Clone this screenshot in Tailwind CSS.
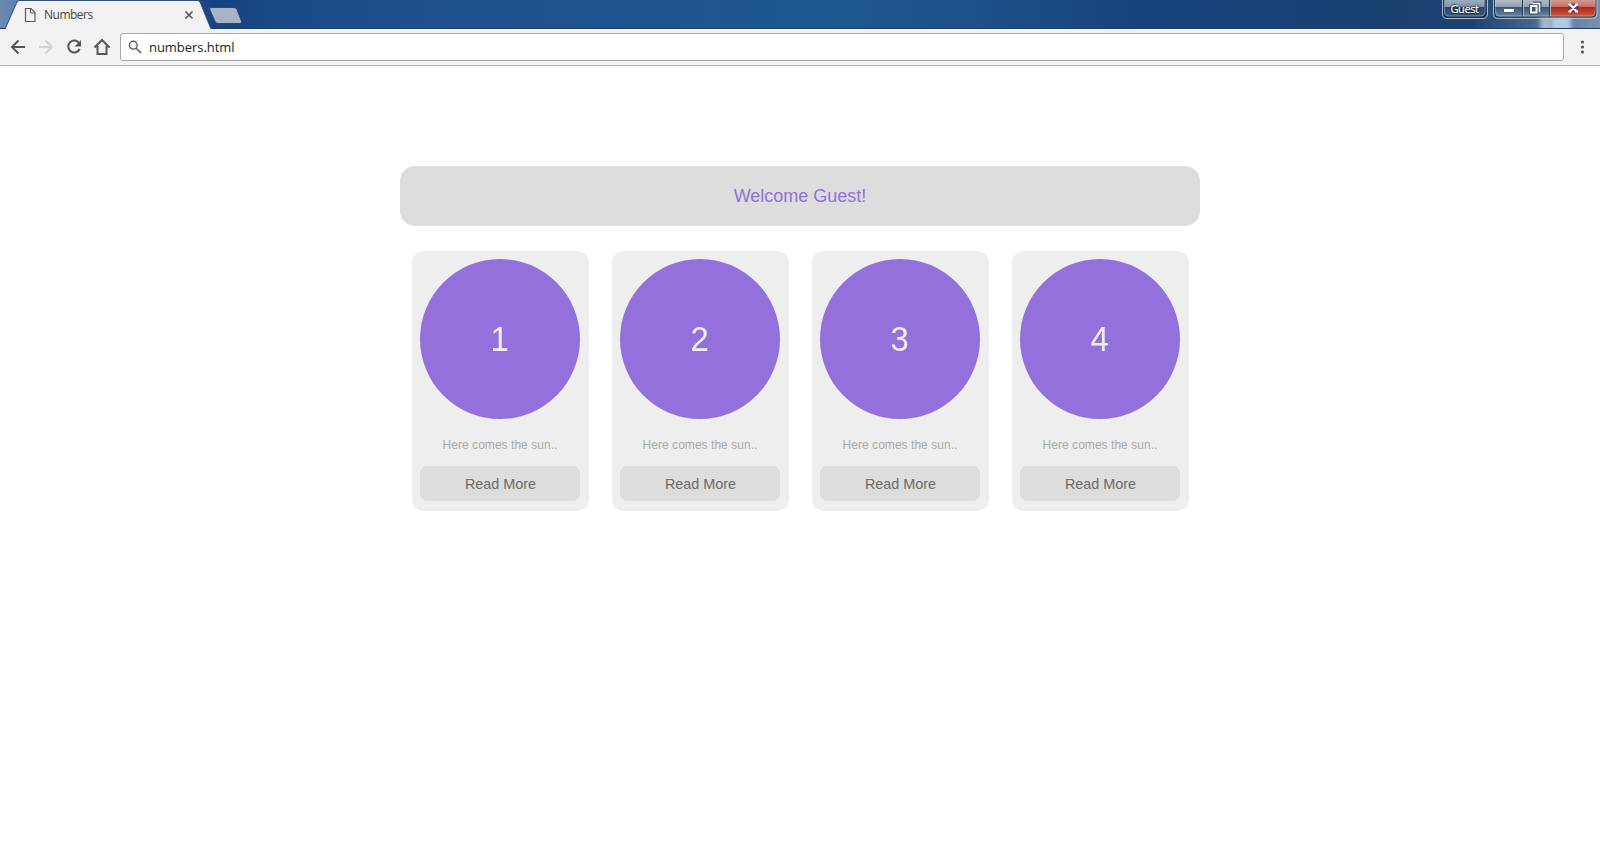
<!DOCTYPE html>
<html lang="en">
<head>
<meta charset="utf-8">
<title>Numbers</title>
<script src="https://cdn.jsdelivr.net/npm/@tailwindcss/browser@4"></script>
</head>
<body class="bg-white w-[1600px] h-[860px] overflow-hidden font-['Liberation_Sans',sans-serif]">
<header class="relative h-[29px] bg-[linear-gradient(90deg,#6b89b2_0px,#5c7cab_20px,#174480_215px,#1b4d8b_330px,#1e538e_560px,#1c578e_850px,#1c5088_980px,#17427b_1160px,#19406f_1390px,#1c4373_1470px,#43648b_1530px,#6482a2_1570px,#7890ad_1600px)]">
  <svg class="absolute inset-0" width="1600" height="29" viewBox="0 0 1600 29">
    <defs>
      <linearGradient id="glass" x1="0" y1="0" x2="0" y2="1"><stop offset="0" stop-color="#a5b3c5"/><stop offset=".47" stop-color="#8294ac"/><stop offset=".5" stop-color="#2c4666"/><stop offset="1" stop-color="#3d5c80"/></linearGradient>
      <linearGradient id="glass2" x1="0" y1="0" x2="0" y2="1"><stop offset="0" stop-color="#b6c1ce"/><stop offset=".47" stop-color="#8fa0b5"/><stop offset=".5" stop-color="#3d5674"/><stop offset="1" stop-color="#7189a5"/></linearGradient>
      <linearGradient id="red" x1="0" y1="0" x2="0" y2="1"><stop offset="0" stop-color="#dba8a0"/><stop offset=".47" stop-color="#c46c60"/><stop offset=".5" stop-color="#ad2818"/><stop offset="1" stop-color="#cf604b"/></linearGradient>
      <filter id="soft" x="-50%" width="200%"><feGaussianBlur stdDeviation="2 0"/></filter>
    </defs>
    <path d="M1540 0h12v28h-12z" fill="#a3b8c8" filter="url(#soft)"/>
    <path d="M1551 0h20v28h-20z" fill="#b1c9e5" filter="url(#soft)"/>
    <path d="M0 28.500H1600" stroke="#264064"/>
    <path d="M5 29 L17 2 Q18 .5 20 .5H205Q207 .5 207.500 2L211 29" fill="none"/>
    <path d="M5 29 L17 2 Q18 .5 20 .5H197Q199 .5 200 2L211 29" fill="#f2f2f2" stroke="#31527c"/>
    <path d="M211 7.500H234Q236 7.500 236.700 9L241.500 21Q242.300 23.500 240 23.500H218Q216 23.500 215 21.500L209.800 9.500Q209 7.500 211 7.500Z" fill="#a7b4c3" stroke="#234a7b"/>
    <g fill="none" stroke="#5a5a5a"><path d="M25.500 8.500h5.500l4 4v9h-9.500z" stroke-width="1.200"/><path d="M30.500 8.500v4.500h4.500"/><path d="M185.500 11.500l7 7m0-7l-7 7" stroke-width="1.700"/></g>
    <path d="M1443.500-2V13q0 4 4 4h34q4 0 4-4V-2z" fill="url(#glass)" stroke="#1d3049" stroke-width="2"/>
    <path d="M1442.500-2V14q0 4.500 4.500 4.500h36q4.500 0 4.500-4.500V-2" fill="none" stroke="#a9b8ca"/>
    <path d="M1444.500-2V12q0 4 4 4h32.500q4 0 4-4V-2" fill="none" stroke="#91a4ba" stroke-opacity=".7"/>
    <path d="M1495-2V13q0 4 4 4h24V-2z" fill="url(#glass2)"/><path d="M1523-2h27v19h-27z" fill="url(#glass2)"/>
    <path d="M1550-2h46V13q0 4-4 4h-42z" fill="url(#red)"/>
    <path d="M1494.500-2V13q0 4 4 4h93.500q4 0 4-4V-2M1522.500 0v17M1549.500 0v17" fill="none" stroke="#26364d"/>
    <path d="M1493.500-2V14q0 4.500 4.500 4.500h94.500q4.500 0 4.500-4.500V-2M1523.500 0v16M1550.500 0v16" fill="none" stroke="#b8c4d2" stroke-opacity=".85"/>
    <path d="M1495.500-2V12q0 4 4 4h91.500q4 0 4-4V-2" fill="none" stroke="#e6e9ee" stroke-opacity=".3"/>
    <path d="M1503.500 8.500h11v4h-11z" fill="#fff" stroke="#4d5c70"/>
    <g fill="none"><path d="M1533 3.500h6.500v8M1531 6h5.500v6.500h-5.500z" stroke="#414f65" stroke-width="4"/><path d="M1532.500 3.500h7v8.500" stroke="#f5f6f7" stroke-width="1.500"/><path d="M1531 6h5.500v6.500h-5.500z" stroke="#f5f6f7" stroke-width="2"/></g>
    <path d="M1570 4.500l6.500 7m0-7l-6.500 7" stroke="#5d4554" stroke-width="5"/><path d="M1570 4.500l6.500 7m0-7l-6.500 7M1568.500 4.500h3m3.500 0h3M1568.500 11.500h3m3.500 0h3" stroke="#fff" stroke-width="2"/>
  </svg>
  <div class="relative flex h-[29px] items-center pl-[44px]">
    <span class="text-[12px] leading-[16px] text-[#444] font-['Open_Sans',sans-serif] tracking-[-0.5px]">Numbers</span>
    <span class="absolute left-[1443px] top-0 w-[43px] text-center text-[11px] leading-[18px] text-white font-['Open_Sans',sans-serif] tracking-[-0.4px] [-webkit-text-stroke:0.2px_white] [text-shadow:0_0_2px_#000,0_0_2px_#000]">Guest</span>
  </div>
</header>
<nav class="flex h-[37px] items-center border-b border-[#b5b3b5] bg-[#f2f2f2]">
  <svg class="shrink-0" width="120" height="36" viewBox="0 29 120 36" fill="none" stroke="#555" stroke-width="2">
    <path d="M25 47H12.500M18.500 40.500L12 47l6.500 6.500"/>
    <path d="M39 47H51.500M45.500 40.500L52 47l-6.500 6.500" stroke="#d3d3d3"/>
    <path d="M79.300 43.300A6 6 0 1 0 79.700 49"/><path d="M81 40v6.500h-6.500z" fill="#555" stroke="none"/>
    <path d="M94.500 47.500L102 40l7.500 7.500M97.500 46v8h9v-8"/>
  </svg>
  <div class="flex h-[28px] w-[1444px] items-center rounded-[3px] border border-[#a9a9a9] bg-white">
    <svg class="ml-[7px] shrink-0" width="14" height="14" viewBox="0 0 14 14" fill="none" stroke="#5a5a5a"><circle cx="5.300" cy="5.200" r="3.900" stroke-width="1.400"/><path d="M8.200 8.200L13 13" stroke-width="1.600"/></svg>
    <span class="ml-[7px] text-[13px] leading-[20px] text-[#222] font-['Open_Sans',sans-serif] tracking-[-0.05px]">numbers.html</span>
  </div>
  <svg class="ml-[13px]" width="12" height="20" viewBox="0 0 12 20" fill="#555"><circle cx="5.500" cy="5" r="1.600"/><circle cx="5.500" cy="10" r="1.600"/><circle cx="5.500" cy="15" r="1.600"/></svg>
</nav>
<main class="mx-auto mt-[100px] w-[800px]">
  <h1 class="flex h-[60px] items-center justify-center rounded-[15px] bg-[#ddd] text-[18px] text-[#9370db]">Welcome Guest!</h1>
  <section class="mt-[25px] flex gap-[23px] pl-[12px]">
    <article class="h-[260px] w-[177px] shrink-0 rounded-[12px] bg-[#eee] px-2 pt-2 text-center">
      <div class="flex size-[160px] items-center justify-center rounded-full bg-[#9370db] pr-px text-[35px] text-[#eee]"><span class="scale-x-[.94]">1</span></div>
      <p class="mt-[18px] w-[160px] text-[12px] leading-[16px] tracking-[0.04px] text-[#aaa]">Here comes the sun..</p>
      <a class="mt-[13px] flex h-[35px] w-[160px] items-center justify-center rounded-[7px] bg-[#ddd] pt-[2px] pl-px text-[14.4px] text-[#696969]">Read More</a>
    </article>
    <article class="h-[260px] w-[177px] shrink-0 rounded-[12px] bg-[#eee] px-2 pt-2 text-center">
      <div class="flex size-[160px] items-center justify-center rounded-full bg-[#9370db] pr-px text-[35px] text-[#eee]"><span class="scale-x-[.94]">2</span></div>
      <p class="mt-[18px] w-[160px] text-[12px] leading-[16px] tracking-[0.04px] text-[#aaa]">Here comes the sun..</p>
      <a class="mt-[13px] flex h-[35px] w-[160px] items-center justify-center rounded-[7px] bg-[#ddd] pt-[2px] pl-px text-[14.4px] text-[#696969]">Read More</a>
    </article>
    <article class="h-[260px] w-[177px] shrink-0 rounded-[12px] bg-[#eee] px-2 pt-2 text-center">
      <div class="flex size-[160px] items-center justify-center rounded-full bg-[#9370db] pr-px text-[35px] text-[#eee]"><span class="scale-x-[.94]">3</span></div>
      <p class="mt-[18px] w-[160px] text-[12px] leading-[16px] tracking-[0.04px] text-[#aaa]">Here comes the sun..</p>
      <a class="mt-[13px] flex h-[35px] w-[160px] items-center justify-center rounded-[7px] bg-[#ddd] pt-[2px] pl-px text-[14.4px] text-[#696969]">Read More</a>
    </article>
    <article class="h-[260px] w-[177px] shrink-0 rounded-[12px] bg-[#eee] px-2 pt-2 text-center">
      <div class="flex size-[160px] items-center justify-center rounded-full bg-[#9370db] pr-px text-[35px] text-[#eee]"><span class="scale-x-[.94]">4</span></div>
      <p class="mt-[18px] w-[160px] text-[12px] leading-[16px] tracking-[0.04px] text-[#aaa]">Here comes the sun..</p>
      <a class="mt-[13px] flex h-[35px] w-[160px] items-center justify-center rounded-[7px] bg-[#ddd] pt-[2px] pl-px text-[14.4px] text-[#696969]">Read More</a>
    </article>
  </section>
</main>
</body>
</html>
